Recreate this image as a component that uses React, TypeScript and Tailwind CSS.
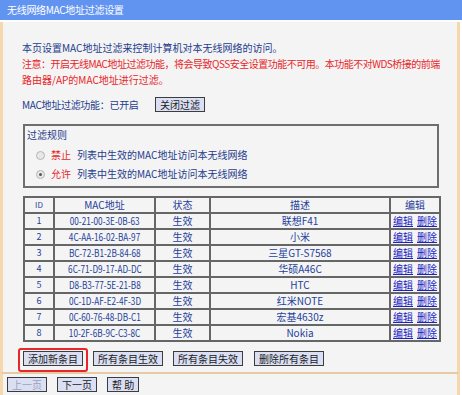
import React from 'react'

const rows = [
    ['1', '00-21-00-3E-0B-63', '联想F41'],
    ['2', '4C-AA-16-02-BA-97', '小米'],
    ['3', 'BC-72-B1-2B-84-68', '三星GT-S7568'],
    ['4', '6C-71-D9-17-AD-DC', '华硕A46C'],
    ['5', 'D8-B3-77-5E-21-B8', 'HTC'],
    ['6', '0C-1D-AF-E2-4F-3D', '红米NOTE'],
    ['7', '0C-60-76-48-DB-C1', '宏基4630z'],
    ['8', '10-2F-6B-9C-C3-8C', 'Nokia'],
]

const Btn = ({ children, disabled }: { children: React.ReactNode; disabled?: boolean }) => (
    <span
        className={
            'inline-flex h-[15px] items-center justify-center border border-[#3c3c3c] bg-[#dadff4] px-[4px] leading-[13px] ' +
            (disabled ? 'text-[#9aa3b8]' : 'text-[#1c1c1c]')
        }
    >
        {children}
    </span>
)

const Radio = ({ checked }: { checked?: boolean }) => (
    <span className="inline-flex h-[9px] w-[9px] items-center justify-center rounded-full border border-[#b4b4b4] bg-[#e8e8e8]">
        {checked && <span className="h-[3px] w-[3px] rounded-full bg-[#555]" />}
    </span>
)

const App = () => {
    return (
        <div className="h-[395px] w-[462px] overflow-hidden bg-white font-['Noto_Sans_CJK_SC',sans-serif] text-[10px] leading-[16px]">
            {/* Header */}
            <div className="h-[20px] bg-[#6194f1] px-[7px] leading-[20px] tracking-[-0.3px] text-white">无线网络MAC地址过滤设置</div>

            {/* Body */}
            <div className="mt-[2px] h-[350px] w-[460px] border-x-[3px] border-[#f7d8ac] bg-[#f4f4f4] pl-[19px] pr-[18px] pt-[18px]">
                <div className="whitespace-nowrap text-[#1f3c8c]">本页设置MAC地址过滤来控制计算机对本无线网络的访问。</div>
                <div className="whitespace-nowrap tracking-[-0.5px] text-[#e8262a]">
                    注意：开启无线MAC地址过滤功能，将会导致QSS安全设置功能不可用。本功能不对WDS桥接的前端
                </div>
                <div className="whitespace-nowrap text-[#e8262a]">路由器/AP的MAC地址进行过滤。</div>

                <div className="mt-[9px] flex h-[15px] items-center text-[#1f3c8c]">
                    <span className="w-[133px] tracking-[-0.3px]">MAC地址过滤功能：已开启</span>
                    <Btn>关闭过滤</Btn>
                </div>

                {/* Filter rules */}
                <div className="ml-[1px] mt-[12px] h-[64px] w-[416px] border-2 border-[#6e6e6e] pl-[2px] pt-[1px]">
                    <div className="text-[#1f3c8c]">过滤规则</div>
                    <div className="mt-[4px] flex items-center pl-[9px]">
                        <Radio />
                        <span className="ml-[6px] text-[#e8262a]">禁止</span>
                        <span className="ml-[6px] text-[#1f3c8c]">列表中生效的MAC地址访问本无线网络</span>
                    </div>
                    <div className="mt-[3px] flex items-center pl-[9px]">
                        <Radio checked />
                        <span className="ml-[6px] text-[#e8262a]">允许</span>
                        <span className="ml-[6px] text-[#1f3c8c]">列表中生效的MAC地址访问本无线网络</span>
                    </div>
                </div>

                {/* Table */}
                <table className="ml-[1px] mt-[8px] w-[416px] table-fixed border-collapse text-center text-[#24419a]">
                    <colgroup>
                        <col className="w-[30px]" />
                        <col className="w-[101px]" />
                        <col className="w-[55px]" />
                        <col className="w-[180px]" />
                        <col className="w-[50px]" />
                    </colgroup>
                    <thead>
                        <tr>
                            <th className="h-[16px] border-2 border-[#666] p-0 text-[8px] font-normal leading-[14px]">ID</th>
                            <th className="h-[16px] border-2 border-[#666] p-0 font-normal leading-[14px]">MAC地址</th>
                            <th className="h-[16px] border-2 border-[#666] p-0 font-normal leading-[14px]">状态</th>
                            <th className="h-[16px] border-2 border-[#666] p-0 font-normal leading-[14px]">描述</th>
                            <th className="h-[16px] border-2 border-[#666] p-0 font-normal leading-[14px]">编辑</th>
                        </tr>
                    </thead>
                    <tbody>
                        {rows.map(([id, mac, desc]) => (
                            <tr key={id}>
                                <td className="h-[16px] border-2 border-[#666] p-0 text-[9px] leading-[14px]">{id}</td>
                                <td className="h-[16px] border-2 border-[#666] p-0 leading-[14px]">
                                    <span className="inline-block scale-x-[0.82] whitespace-nowrap">{mac}</span>
                                </td>
                                <td className="h-[16px] border-2 border-[#666] p-0 leading-[14px]">生效</td>
                                <td className="h-[16px] border-2 border-[#666] p-0 leading-[14px]">{desc}</td>
                                <td className="h-[16px] border-2 border-[#666] p-0 leading-[14px] text-[#1a22c4]">
                                    <span className="underline">编辑</span>
                                    <span className="ml-[4px] underline">删除</span>
                                </td>
                            </tr>
                        ))}
                    </tbody>
                </table>

                {/* Action buttons */}
                <div className="-ml-[4px] mt-[6px] flex h-[23px] items-start">
                    <span className="rounded-[3px] border-2 border-[#e8262a] px-[3px] pb-[3px] pt-[1px]">
                        <Btn>添加新条目</Btn>
                    </span>
                    <span className="ml-[5px] mt-[3px]">
                        <Btn>所有条目生效</Btn>
                    </span>
                    <span className="ml-[10px] mt-[3px]">
                        <Btn>所有条目失效</Btn>
                    </span>
                    <span className="ml-[11px] mt-[3px]">
                        <Btn>删除所有条目</Btn>
                    </span>
                </div>
            </div>

            {/* Footer */}
            <div className="flex h-[23px] w-[460px] items-start gap-[10px] border-x-[3px] border-t-2 border-x-[#f7d8ac] border-t-[#e6cba6] bg-[#f4f4f4] pl-[4px] pt-[3px]">
                <Btn disabled>上一页</Btn>
                <Btn>下一页</Btn>
                <Btn>帮 助</Btn>
            </div>
        </div>
    )
}

export default App
